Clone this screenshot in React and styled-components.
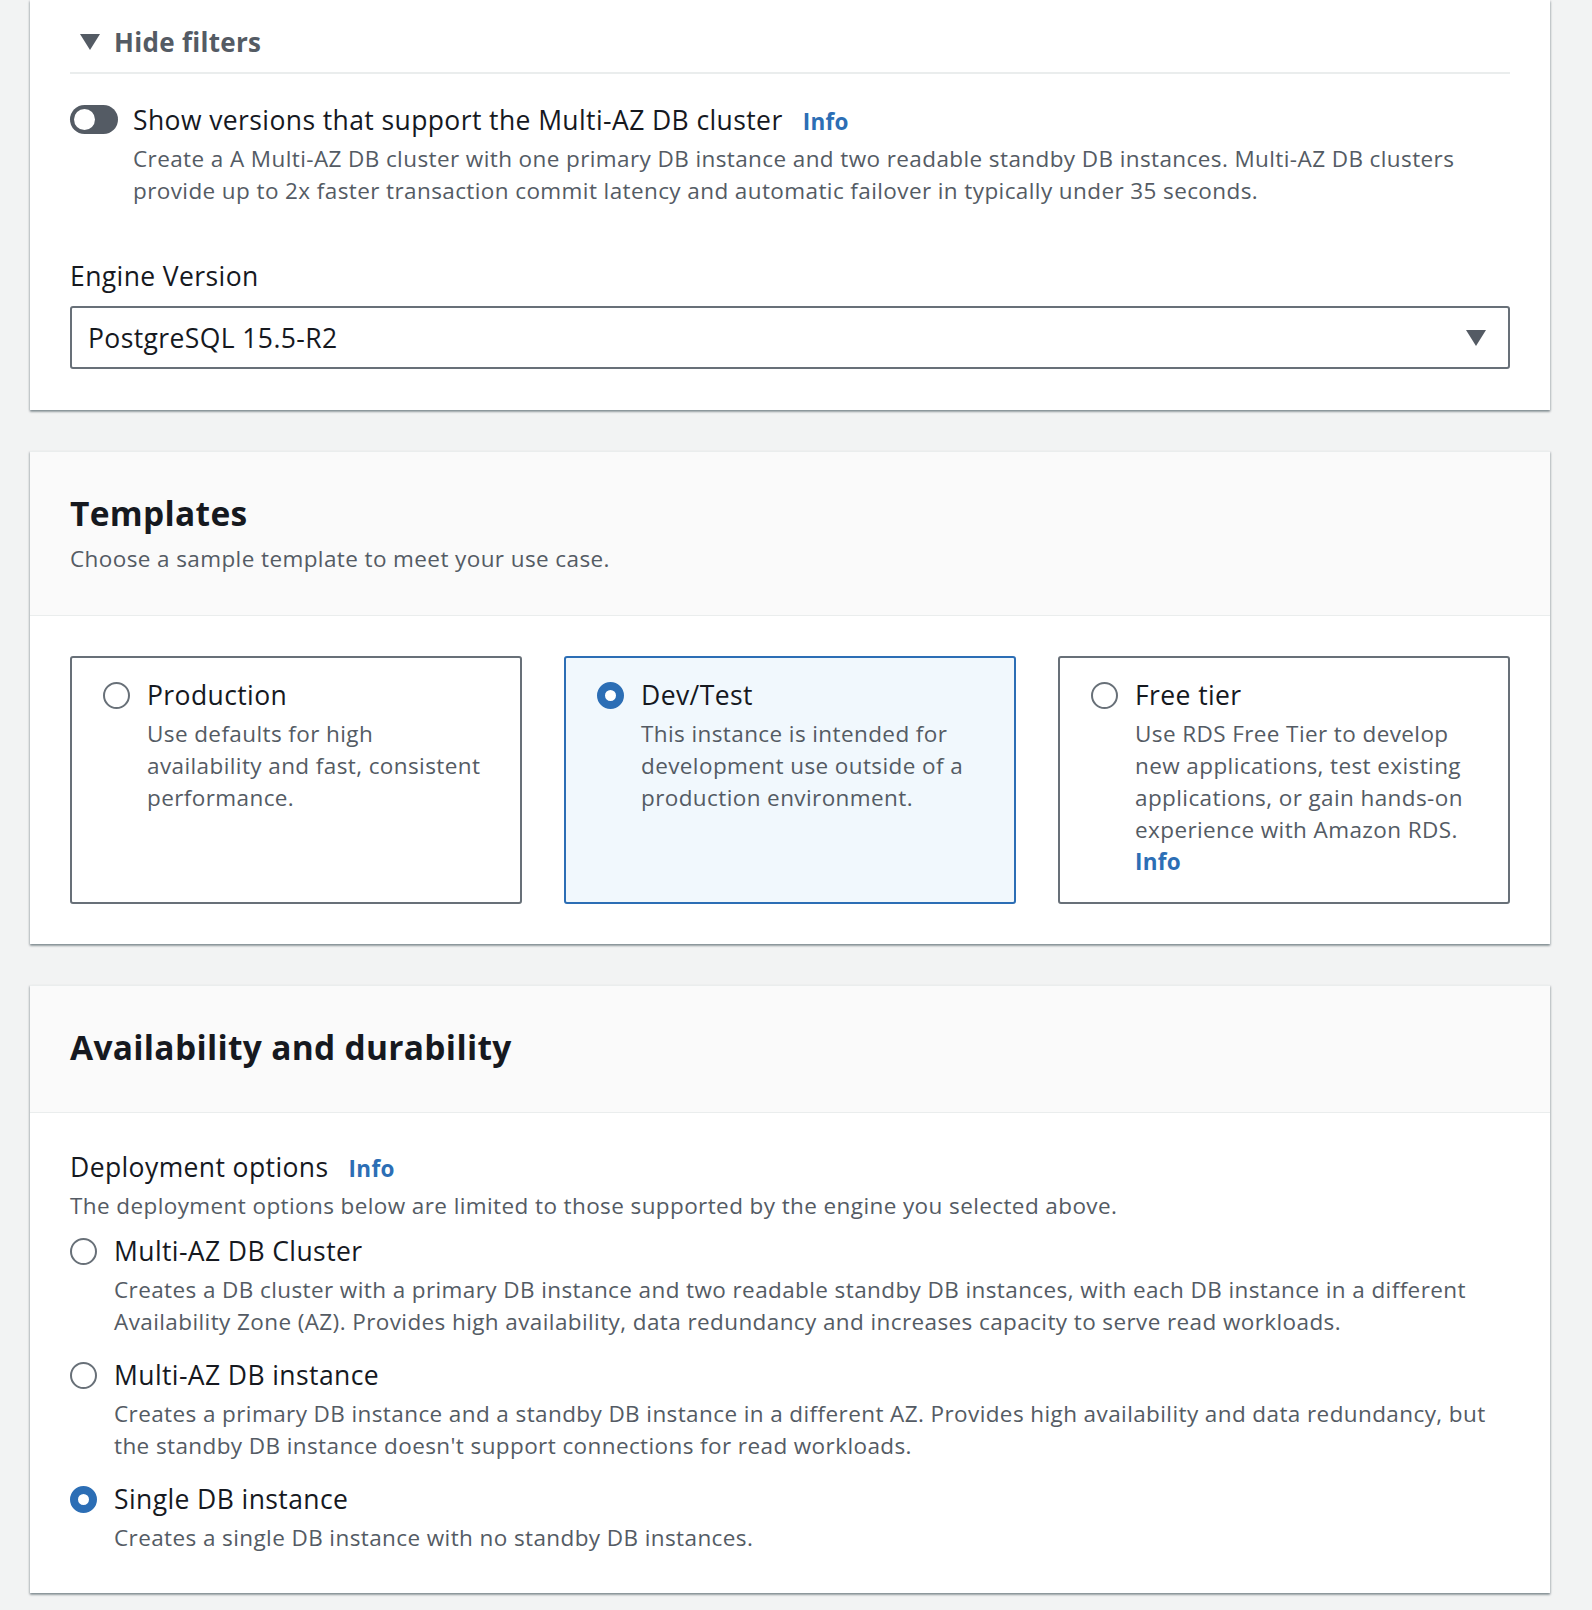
import React from "react";
import styled, { createGlobalStyle } from "styled-components";

const GlobalStyle = createGlobalStyle`
  html, body {
    margin: 0;
    padding: 0;
    background: #f2f3f3;
  }
  body {
    font-family: "Open Sans", "Noto Sans", sans-serif;
    color: #16191f;
  }
`;

const Page = styled.div`
  padding: 0 42px 16px 30px;
  display: flex;
  flex-direction: column;
  gap: 41px;
`;

const Card = styled.section`
  background: #fff;
  border-top: ${p => (p.$cut ? "none" : "1px solid #eaeded")};
  box-shadow: 0 2px 2px 0 rgba(0, 28, 36, 0.3),
    1px 1px 2px 0 rgba(0, 28, 36, 0.15),
    -1px 1px 2px 0 rgba(0, 28, 36, 0.15);
`;

const CardHeader = styled.header`
  background: #fafafa;
  border-bottom: 1px solid #eaeded;
  padding: ${p => p.$pad || "40px"};
`;

const CardBody = styled.div`
  padding: ${p => p.$pad || "40px"};
`;

const H2 = styled.h2`
  margin: 0;
  font-size: 33.5px;
  line-height: 42px;
  letter-spacing: 0.3px;
  font-weight: 700;
  color: #16191f;
`;

const Sub = styled.p`
  margin: 9px 0 0;
  font-size: 22.5px;
  line-height: 32px;
  letter-spacing: 0.4px;
  color: #545b64;
`;

const FilterToggle = styled.div`
  display: flex;
  align-items: center;
  gap: 14px;
  height: 50px;
  padding: 17px 0 5px 10px;
  border-bottom: 2px solid #eaeded;
  font-size: 26px;
  letter-spacing: 0.3px;
  font-weight: 700;
  color: #545b64;
`;

const Caret = styled.span`
  flex: none;
  width: 0;
  height: 0;
  border-left: 10px solid transparent;
  border-right: 10px solid transparent;
  border-top: 16px solid #545b64;
`;

const Row = styled.div`
  display: flex;
  gap: ${p => p.$gap || "15px"};
  align-items: flex-start;
  margin-top: ${p => p.$mt || "0"};
`;

const Toggle = styled.span`
  flex: none;
  width: 48px;
  height: 29px;
  border-radius: 15px;
  background: #545b64;
  position: relative;
  margin-top: 3px;
  &::after {
    content: "";
    position: absolute;
    left: 4px;
    top: 4px;
    width: 21px;
    height: 21px;
    border-radius: 50%;
    background: #fff;
  }
`;

const Label = styled.div`
  font-size: 26.5px;
  line-height: 36px;
  letter-spacing: 0.4px;
  color: #16191f;
  display: flex;
  align-items: baseline;
  gap: 20px;
  margin-top: ${p => p.$mt || "0"};
`;

const Info = styled.a`
  font-size: 22.5px;
  font-weight: 700;
  letter-spacing: 0.3px;
  color: #2c6eb5;
  text-decoration: none;
`;

const Desc = styled.div`
  font-size: 22.5px;
  line-height: 32px;
  letter-spacing: 0.4px;
  color: #545b64;
  margin-top: ${p => p.$mt || "5px"};
`;

const Select = styled.div`
  margin-top: 12px;
  height: 63px;
  box-sizing: border-box;
  border: 2px solid #687078;
  border-radius: 3px;
  display: flex;
  align-items: center;
  justify-content: space-between;
  padding: 0 22px 0 16px;
  font-size: 26.5px;
  letter-spacing: 0.4px;
  color: #16191f;
`;

const Tiles = styled.div`
  display: grid;
  grid-template-columns: repeat(3, 1fr);
  gap: 42px;
`;

const Tile = styled.div`
  border: 2px solid ${p => (p.$on ? "#2c6eb5" : "#687078")};
  background: ${p => (p.$on ? "#f1f8fd" : "#fff")};
  border-radius: 3px;
  padding: 19px 30px 24px 31px;
  min-height: 246px;
  box-sizing: border-box;
  display: flex;
  gap: 17px;
  align-items: flex-start;
`;

const Radio = styled.span`
  flex: none;
  width: 27px;
  height: 27px;
  box-sizing: border-box;
  border-radius: 50%;
  margin-top: 5px;
  border: ${p => (p.$on ? "8px solid #2c6eb5" : "2px solid #687078")};
  background: #fff;
`;

const TileText = styled.div`
  display: flex;
  flex-direction: column;
`;

const Options = styled.div`
  display: flex;
  flex-direction: column;
  gap: 19px;
  margin-top: 11px;
`;

const Option = styled.div`
  display: flex;
  gap: 17px;
  align-items: flex-start;
`;

function Choice({ on, title, children }) {
  return (
    <Option>
      <Radio $on={on} />
      <TileText>
        <Label>{title}</Label>
        <Desc>{children}</Desc>
      </TileText>
    </Option>
  );
}

export default function App() {
  return (
    <>
      <GlobalStyle />
      <Page>
        <Card $cut>
          <CardBody $pad="0 40px 41px">
            <FilterToggle>
              <Caret />
              Hide filters
            </FilterToggle>
            <Row $mt="28px">
              <Toggle />
              <div>
                <Label>
                  Show versions that support the Multi-AZ DB cluster
                  <Info>Info</Info>
                </Label>
                <Desc $mt="3px">
                  Create a A Multi-AZ DB cluster with one primary DB instance and two readable standby DB
                  instances. Multi-AZ DB clusters provide up to 2x faster transaction commit latency and
                  automatic failover in typically under 35 seconds.
                </Desc>
              </div>
            </Row>
            <Label $mt="51px">Engine Version</Label>
            <Select>
              PostgreSQL 15.5-R2
              <Caret />
            </Select>
          </CardBody>
        </Card>

        <Card>
          <CardHeader>
            <H2>Templates</H2>
            <Sub>Choose a sample template to meet your use case.</Sub>
          </CardHeader>
          <CardBody>
            <Tiles>
              <Tile>
                <Radio />
                <TileText>
                  <Label>Production</Label>
                  <Desc>Use defaults for high availability and fast, consistent performance.</Desc>
                </TileText>
              </Tile>
              <Tile $on>
                <Radio $on />
                <TileText>
                  <Label>Dev/Test</Label>
                  <Desc>This instance is intended for development use outside of a production environment.</Desc>
                </TileText>
              </Tile>
              <Tile>
                <Radio />
                <TileText>
                  <Label>Free tier</Label>
                  <Desc>
                    Use RDS Free Tier to develop new applications, test existing applications, or gain
                    hands-on experience with Amazon RDS.
                    <br />
                    <Info>Info</Info>
                  </Desc>
                </TileText>
              </Tile>
            </Tiles>
          </CardBody>
        </Card>

        <Card>
          <CardHeader $pad="40px 40px 44px">
            <H2>Availability and durability</H2>
          </CardHeader>
          <CardBody $pad="36px 40px 39px">
            <Label>
              Deployment options
              <Info>Info</Info>
            </Label>
            <Desc $mt="3px">
              The deployment options below are limited to those supported by the engine you selected above.
            </Desc>
            <Options>
              <Choice title="Multi-AZ DB Cluster">
                Creates a DB cluster with a primary DB instance and two readable standby DB instances, with
                each DB instance in a different Availability Zone (AZ). Provides high availability, data
                redundancy and increases capacity to serve read workloads.
              </Choice>
              <Choice title="Multi-AZ DB instance">
                Creates a primary DB instance and a standby DB instance in a different AZ. Provides high
                availability and data redundancy, but the standby DB instance doesn't support connections for
                read workloads.
              </Choice>
              <Choice on title="Single DB instance">
                Creates a single DB instance with no standby DB instances.
              </Choice>
            </Options>
          </CardBody>
        </Card>
      </Page>
    </>
  );
}
